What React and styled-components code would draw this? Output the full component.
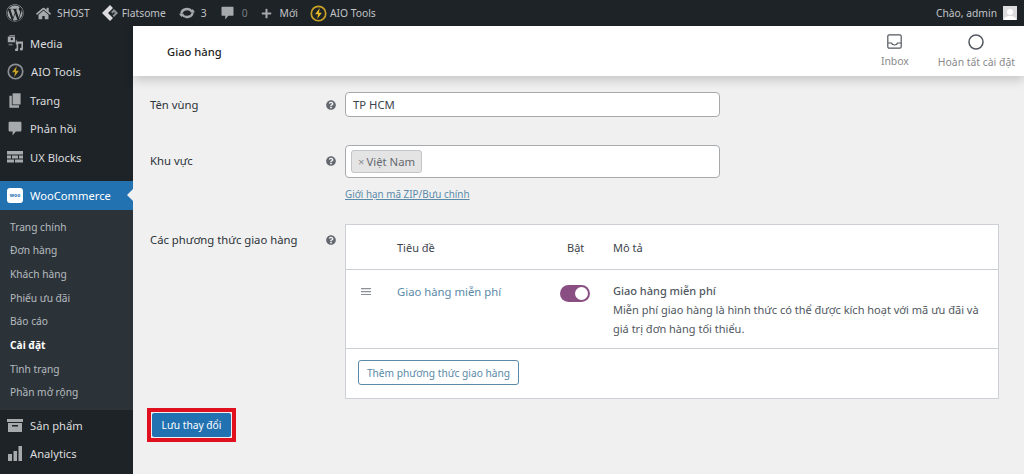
import React from 'react';
import styled, { createGlobalStyle } from 'styled-components';
import { FaWordpress, FaHome, FaPlus, FaQuestionCircle } from 'react-icons/fa';

const Global = createGlobalStyle`
  html, body { margin: 0; padding: 0; height: 474px; overflow: hidden; background: #f0f0f1; }
  * { box-sizing: border-box; }
  body { font-family: "Noto Sans", "Open Sans", sans-serif; font-size: 11.3px; color: #3c434a; }
`;

const Page = styled.div`width: 1024px; height: 474px; display: flex; flex-direction: column; overflow: hidden;`;
const AdminBar = styled.header`
  height: 26px; flex: none; background: #1d2327; color: #c3c4c7; display: flex; align-items: center;
  padding: 0 7px 0 6px; font-size: 10.3px;
`;
const BarItem = styled.div`
  display: flex; align-items: center; gap: ${p => p.$gap ?? 5}px; margin-right: ${p => p.$mr ?? 10}px;
  svg { flex: none; color: #a7aaad; }
`;
const Spacer = styled.div`flex: 1;`;
const Avatar = styled.div`
  width: 14px; height: 14px; background: #dcdcde; margin-left: 6px; display: flex; align-items: flex-end; justify-content: center; overflow: hidden;
`;
const Body = styled.div`flex: 1; display: flex; min-height: 0;`;
const Sidebar = styled.nav`width: 133px; flex: none; background: #1d2327; color: #dcdcde; overflow: hidden; padding-top: 3px;`;
const MenuItem = styled.div`
  height: 28.5px; display: flex; align-items: center; gap: 7px; padding-left: 7px; font-size: 11.2px;
  svg { flex: none; color: #a7aaad; }
`;
const ActiveItem = styled(MenuItem)`
  position: relative; height: 29px; background: #2271b1; color: #fff; margin-top: 9px;
  &::after {
    content: ""; position: absolute; right: 0; top: 8px; border: 6px solid transparent; border-right-color: #f0f0f1; border-left-width: 0;
  }
`;
const WooBadge = styled.div`
  width: 16px; height: 15px; background: #fff; border-radius: 3px; color: #2271b1; font-size: 5px; font-weight: 700;
  display: flex; align-items: center; justify-content: center; flex: none;
`;
const Submenu = styled.div`background: #2c3338; height: 200.500px; padding: 5.500px 0 0 10px; margin-bottom: 1px;`;
const SubItem = styled.div`
  height: 23.650px; display: flex; align-items: center; font-size: 10.2px;
  color: ${p => (p.$current ? '#fff' : 'rgba(240,246,252,.7)')}; font-weight: ${p => (p.$current ? 700 : 400)};
`;
const Main = styled.main`flex: 1; min-width: 0; display: flex; flex-direction: column;`;
const TopHeader = styled.div`
  height: 50px; flex: none; background: #fff; display: flex; align-items: center; padding: 0 9px 0 34px;
  box-shadow: 0 4px 10px rgba(0,0,0,.18); position: relative;
`;
const Title = styled.h1`margin: 0; flex: 1; font-size: 11.2px; font-weight: 500; color: #1e1e1e;`;
const Action = styled.div`
  display: flex; flex-direction: column; align-items: center; gap: 5px; color: #8a8a8a; font-size: 10.4px; margin-left: ${p => p.$ml}px;
  svg { color: #50575e; }
`;
const Content = styled.div`flex: 1; padding: 16px 0 0 17px;`;
const FormRow = styled.div`
  display: grid; grid-template-columns: 175px 20px 1fr; margin-bottom: ${p => p.$mb}px;
`;
const Label = styled.label`color: #2c3338; font-size: 11.3px; padding-top: ${p => p.$pt}px; line-height: 16px;`;
const Help = styled.div`
  color: #646970; padding-top: ${p => p.$pt}px; display: flex; justify-content: flex-start; padding-left: 1px; height: 20px;
`;
const Input = styled.div`
  width: 375px; height: 25px; background: #fff; border: 1px solid #a7aaad; border-radius: 4px; padding: 0 7px; display: flex; align-items: center; color: #3c434a; font-size: 11.3px;
`;
const TagBox = styled(Input)`height: 33px; padding: 0 5px;`;
const Tag = styled.div`
  height: 23px; padding: 0 6px; background: #e4e4e4; border: 1px solid #c3c4c7; border-radius: 3px; display: flex; align-items: center; gap: 2px; color: #646970;
  span { color: #8c8f94; }
`;
const ZipLink = styled.a`display: block; margin-top: 9px; color: #5a8aa8; font-size: 9.9px; line-height: 14px; text-decoration: underline;`;
const Table = styled.div`width: 654px; background: #fff; border: 1px solid #ccd0d4; height: 175px; display: flex; flex-direction: column;`;
const HeadRow = styled.div`
  height: 45px; flex: none; display: grid; grid-template-columns: 51px 163px 53px 1fr; align-items: center; border-bottom: 1px solid #ccd0d4; color: #3c434a; font-size: 11px;
`;
const ToggleHead = styled.span`padding-left: 7px;`;
const BodyRow = styled.div`
  height: 79px; flex: none; display: grid; grid-template-columns: 51px 163px 53px 1fr; border-bottom: 1px solid #ccd0d4; padding-top: 15px;
`;
const Handle = styled.div`display: flex; align-items: flex-start; padding: 3px 0 0 15px; color: #8c8f94;`;
const MethodLink = styled.a`color: #5a8aa8; font-size: 11.3px; line-height: 14px;`;
const Toggle = styled.div`
  width: 30px; height: 17px; border-radius: 9px; background: #8a4f82; display: flex; align-items: center; justify-content: flex-end; padding-right: 2px;
  &::after { content: ""; width: 13px; height: 13px; border-radius: 50%; background: #fff; }
`;
const Desc = styled.div`font-size: 11px; line-height: 18.3px; color: #50575e; margin-top: -3px; padding-right: 10px;`;
const DescTitle = styled.div`font-weight: 500; color: #50575e; margin-bottom: 1px;`;
const Foot = styled.div`padding: 11px 12px;`;
const Secondary = styled.button`
  height: 25px; width: 161px; padding: 0; background: #fff; border: 1px solid #5a8aa8; border-radius: 3px; color: #5a8aa8; font: inherit; font-size: 10.2px;
`;
const Outline = styled.div`
  width: 89px; height: 34px; border: 4px solid #e0101f; margin: 9px 0 0 -3px; padding: 1px;
`;
const Primary = styled.button`
  width: 100%; height: 100%; padding: 0; background: #2271b1; border: 0; border-radius: 2px; color: #fff; font: inherit; font-size: 10.2px;
`;

const MediaIcon = () => (
  <svg width="16" height="16" viewBox="0 0 20 20" fill="currentColor"><path d="M1 2h9v7H1zM3 0h7v1H3zM6 3.500a1.500 1.500 0 1 0 .01 0zM11 6h1v6h-1zM12 8h8v9.500a2 2 0 1 1-2-2V11h-4v7.500a2 2 0 1 1-2-2V8z" /><path d="M2 11h5v2H2z" opacity=".6" /></svg>
);
const BoltIcon = ({ color = '#a7aaad', bolt = '#a7aaad', size = 17 }) => (
  <svg width={size} height={size} viewBox="0 0 20 20"><circle cx="10" cy="10" r="8.500" fill="none" stroke={color} strokeWidth="2" /><path d="M11.500 3.500 6 11h3.500l-1 5.500L14 9h-3.500z" fill={bolt} /></svg>
);
const PagesIcon = () => (
  <svg width="16" height="17" viewBox="0 0 20 20" fill="currentColor"><path d="M7 1h10v14H7z" /><path d="M3 4h3v12h9v3H3z" /></svg>
);
const CommentIcon = ({ size = 16 }) => (
  <svg width={size} height={size} viewBox="0 0 20 20" fill="currentColor"><path d="M3 1h14a1 1 0 0 1 1 1v10a1 1 0 0 1-1 1h-6l-4 5v-5H3a1 1 0 0 1-1-1V2a1 1 0 0 1 1-1z" /></svg>
);
const BlocksIcon = () => (
  <svg width="16" height="12" viewBox="0 0 16 12" fill="currentColor"><path d="M0 0h16v3.500H0zM0 4.500h4v3H0zM5 4.500h6v3H5zM12 4.500h4v3h-4zM0 8.500h7v3H0zM8 8.500h8v3H8z" /></svg>
);
const ArchiveIcon = () => (
  <svg width="16" height="15" viewBox="0 0 16 15" fill="currentColor"><path d="M0 1h16v3H0zM1 5h14v9H1z" /><path d="M5 7h6v1.500H5z" fill="#1d2327" /></svg>
);
const BarsIcon = () => (
  <svg width="16" height="15" viewBox="0 0 16 15" fill="currentColor"><path d="M1 8h4v7H1zM6.500 5h3.500v10H6.500zM11.500 0H15v15h-3.500z" /></svg>
);
const FlatsomeIcon = () => (
  <svg width="16" height="16" viewBox="0 0 16 16"><path d="M8 0 0 8l8 8 3-3-5-5 5-5z" fill="#dcdcde" /><path d="M9 7l3-3 4 4-4 4-1.500-1.500L13 8l-1-1-1.500 1.500z" fill="#8c8f94" /></svg>
);
const UpdateIcon = () => (
  <svg width="16" height="16" viewBox="0 0 20 20" fill="none" stroke="currentColor" strokeWidth="3"><path d="M3 11a7 6 0 0 1 13-3" /><path d="M17 9a7 6 0 0 1-13 3" /><path d="M14 9h6l-3-4zM6 11H0l3 4z" fill="currentColor" stroke="none" /></svg>
);
const InboxIcon = () => (
  <svg width="15" height="15" viewBox="0 0 15 15" fill="none" stroke="currentColor" strokeWidth="1.200"><rect x=".8" y=".8" width="13.400" height="13.400" rx="1.500" /><path d="M1 9h3.500c.5 1.500 1.500 2 3 2s2.500-.5 3-2H14" /></svg>
);
const RingIcon = () => (
  <svg width="16" height="16" viewBox="0 0 16 16" fill="none" stroke="currentColor" strokeWidth="1.500"><circle cx="8" cy="8" r="7" /></svg>
);
const HandleIcon = () => (
  <svg width="10" height="7" viewBox="0 0 10 7" fill="currentColor"><path d="M0 0h10v1.200H0zM0 3h10v1.200H0zM0 6h10v1H0z" /></svg>
);
const HelpIcon = () => <FaQuestionCircle size={10} />;

const menuTop = [
  [<MediaIcon />, 'Media'],
  [<BoltIcon color="#8c8f94" bolt="#c9a227" />, 'AIO Tools'],
  [<PagesIcon />, 'Trang'],
  [<CommentIcon />, 'Phản hồi'],
  [<BlocksIcon />, 'UX Blocks'],
];
const subItems = ['Trang chính', 'Đơn hàng', 'Khách hàng', 'Phiếu ưu đãi', 'Báo cáo', 'Cài đặt', 'Tình trạng', 'Phần mở rộng'];

export default function App() {
  return (
    <Page>
      <Global />
      <AdminBar>
        <BarItem $mr={12}><FaWordpress size={18} /></BarItem>
        <BarItem $mr={12} $gap={6}><FaHome size={15} />SHOST</BarItem>
        <BarItem $mr={13} $gap={4}><FlatsomeIcon />Flatsome</BarItem>
        <BarItem $mr={13} $gap={6}><UpdateIcon />3</BarItem>
        <BarItem $mr={13} $gap={7}><CommentIcon size={15} /><span style={{ color: '#787c82' }}>0</span></BarItem>
        <BarItem $mr={12} $gap={8}><FaPlus size={11} />Mới</BarItem>
        <BarItem $gap={3}><BoltIcon color="#c9a227" bolt="#e8b923" />AIO Tools</BarItem>
        <Spacer />
        <BarItem $mr={0} $gap={0}>Chào, admin<Avatar><svg width="12" height="12" viewBox="0 0 12 12" fill="#fff"><circle cx="6" cy="4" r="3" /><path d="M0 12c0-3 3-4 6-4s6 1 6 4z" /></svg></Avatar></BarItem>
      </AdminBar>
      <Body>
        <Sidebar>
          {menuTop.map(([icon, label]) => <MenuItem key={label}>{icon}{label}</MenuItem>)}
          <ActiveItem><WooBadge>woo</WooBadge>WooCommerce</ActiveItem>
          <Submenu>
            {subItems.map(s => <SubItem key={s} $current={s === 'Cài đặt'}>{s}</SubItem>)}
          </Submenu>
          <MenuItem><ArchiveIcon />Sản phẩm</MenuItem>
          <MenuItem><BarsIcon />Analytics</MenuItem>
        </Sidebar>
        <Main>
          <TopHeader>
            <Title>Giao hàng</Title>
            <Action><InboxIcon />Inbox</Action>
            <Action $ml={29}><RingIcon />Hoàn tất cài đặt</Action>
          </TopHeader>
          <Content>
            <FormRow $mb={28}>
              <Label $pt={5}>Tên vùng</Label>
              <Help $pt={8}><HelpIcon /></Help>
              <Input>TP HCM</Input>
            </FormRow>
            <FormRow $mb={23}>
              <Label $pt={8}>Khu vực</Label>
              <Help $pt={11}><HelpIcon /></Help>
              <div>
                <TagBox><Tag><span>×</span>Việt Nam</Tag></TagBox>
                <ZipLink>Giới hạn mã ZIP/Bưu chính</ZipLink>
              </div>
            </FormRow>
            <FormRow $mb={0}>
              <Label $pt={8}>Các phương thức giao hàng</Label>
              <Help $pt={11}><HelpIcon /></Help>
              <Table>
                <HeadRow><span /><span>Tiêu đề</span><ToggleHead>Bật</ToggleHead><span>Mô tả</span></HeadRow>
                <BodyRow>
                  <Handle><HandleIcon /></Handle>
                  <MethodLink>Giao hàng miễn phí</MethodLink>
                  <Toggle />
                  <Desc>
                    <DescTitle>Giao hàng miễn phí</DescTitle>
                    Miễn phí giao hàng là hình thức có thể được kích hoạt với mã ưu đãi và giá trị đơn hàng tối thiểu.
                  </Desc>
                </BodyRow>
                <Foot><Secondary>Thêm phương thức giao hàng</Secondary></Foot>
              </Table>
            </FormRow>
            <Outline><Primary>Lưu thay đổi</Primary></Outline>
          </Content>
        </Main>
      </Body>
    </Page>
  );
}
